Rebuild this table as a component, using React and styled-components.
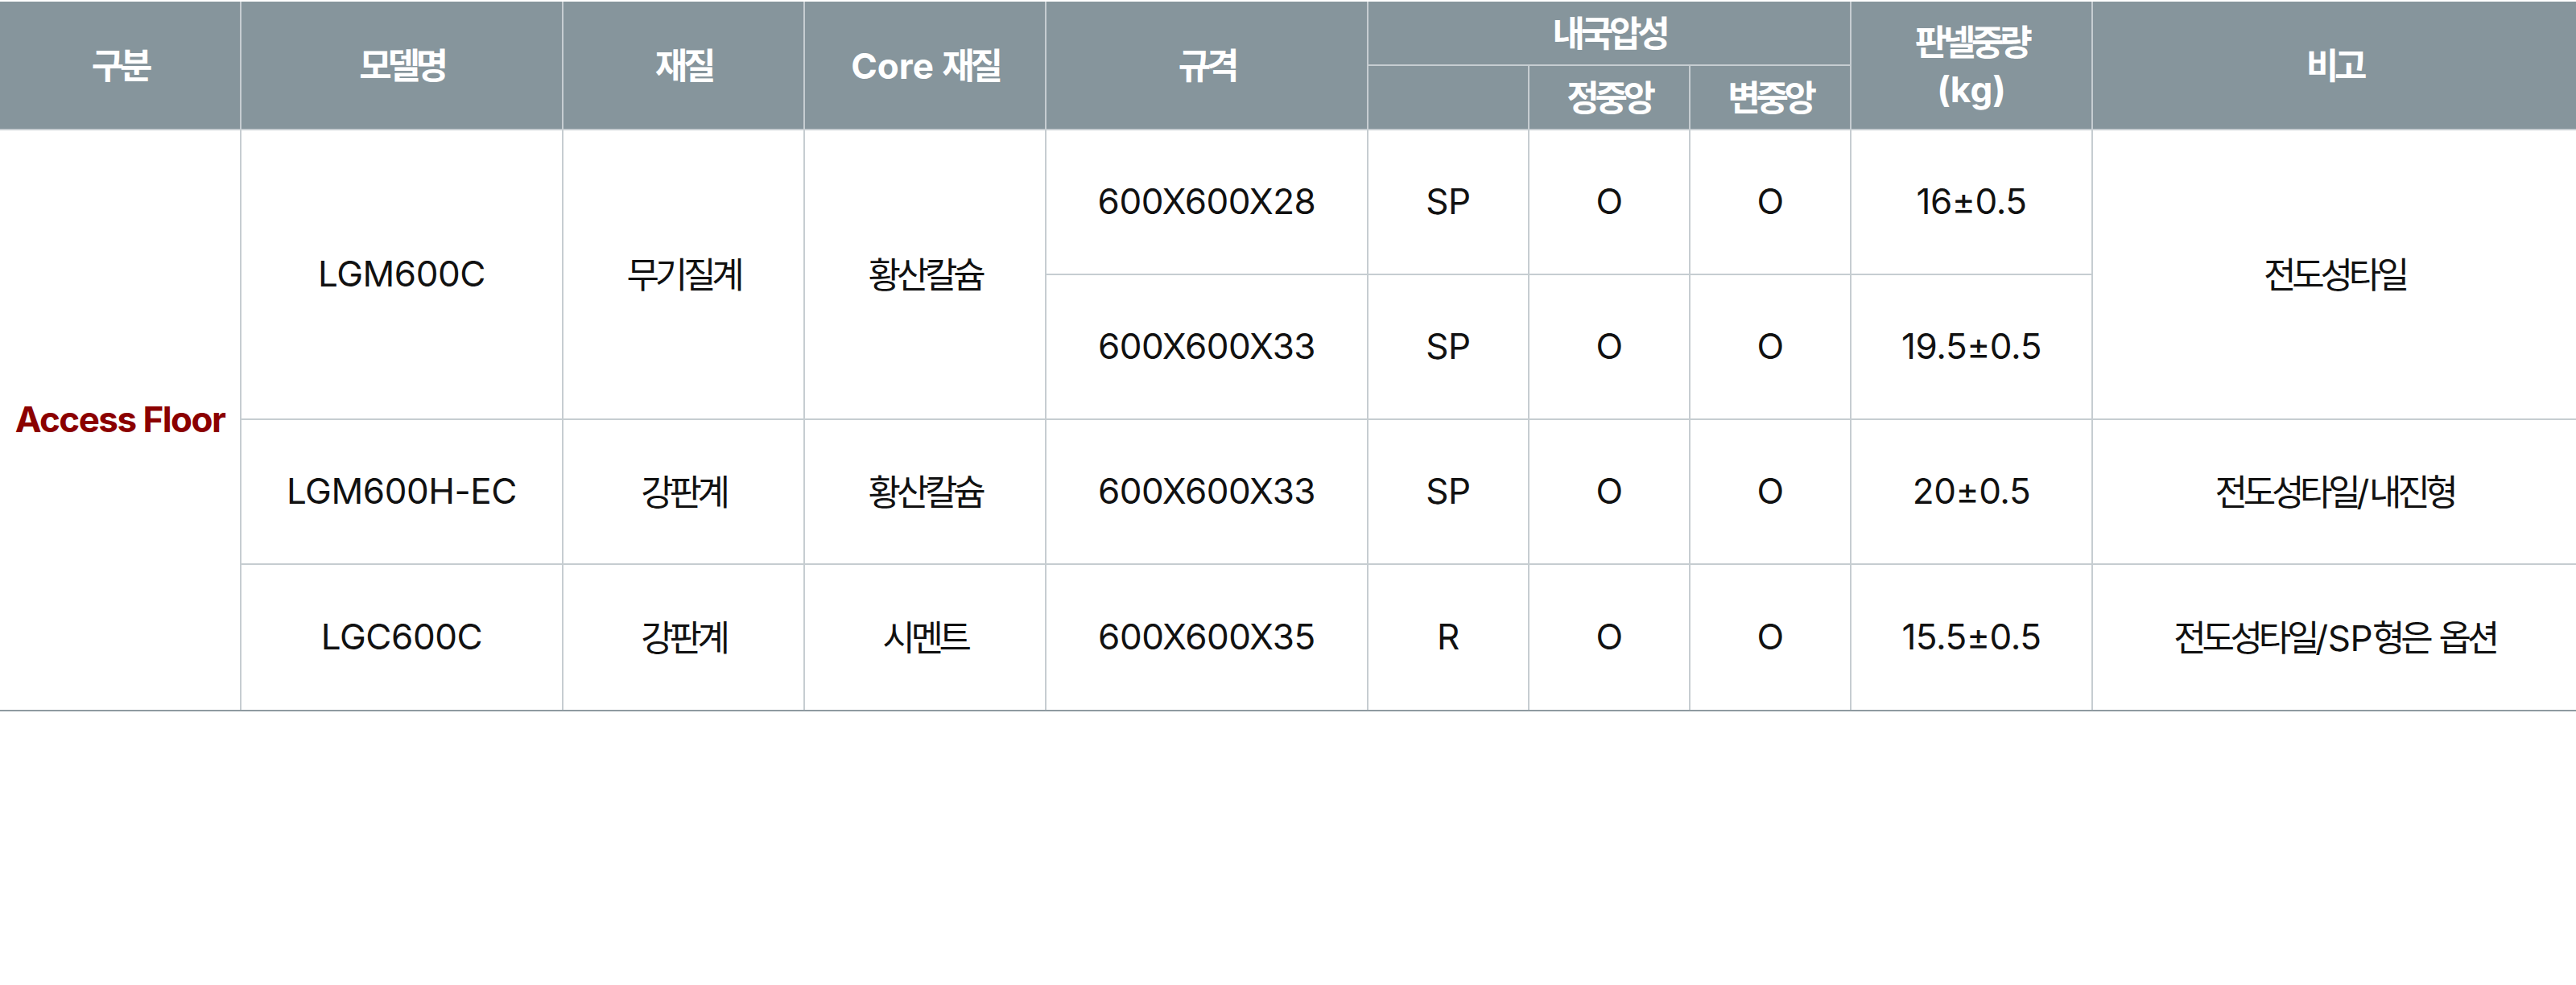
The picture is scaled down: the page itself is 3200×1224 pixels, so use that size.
import React from 'react';
import styled, { createGlobalStyle } from 'styled-components';

const GlobalStyle = createGlobalStyle`
  body {
    margin: 0;
    background: #fff;
    font-family: "Inter", "Noto Sans CJK KR", sans-serif;
  }
`;

const widths = [300, 400, 300, 300, 400, 200, 200, 200, 300, 600];

const rows = [
  { model: 'LGM600C', material: '무기질계', core: '황산칼슘', span: 2, spec: '600X600X28', type: 'SP', center: 'O', edge: 'O', weight: '16±0.5', note: '전도성타일' },
  { spec: '600X600X33', type: 'SP', center: 'O', edge: 'O', weight: '19.5±0.5' },
  { model: 'LGM600H-EC', material: '강판계', core: '황산칼슘', spec: '600X600X33', type: 'SP', center: 'O', edge: 'O', weight: '20±0.5', note: '전도성타일/내진형' },
  { model: 'LGC600C', material: '강판계', core: '시멘트', spec: '600X600X35', type: 'R', center: 'O', edge: 'O', weight: '15.5±0.5', note: '전도성타일/SP형은 옵션' },
];

// hangul runs get tighter spacing so they sit like the original font
const ko = (text) =>
  text.split(/([\uAC00-\uD7A3]+)/).map((part, i) =>
    /[\uAC00-\uD7A3]/.test(part) ? <Ko key={i}>{part}</Ko> : part
  );

function App() {
  return (
    <Wrapper>
      <GlobalStyle />
      <Table>
        <colgroup>
          {widths.map((w, i) => <col key={i} style={{ width: w }} />)}
        </colgroup>
        <thead>
          <HeadRow>
            <Th rowSpan={2}>{ko('구분')}</Th>
            <Th rowSpan={2}>{ko('모델명')}</Th>
            <Th rowSpan={2}>{ko('재질')}</Th>
            <Th rowSpan={2}>{ko('Core 재질')}</Th>
            <Th rowSpan={2}>{ko('규격')}</Th>
            <Th colSpan={3}>{ko('내국압성')}</Th>
            <Th rowSpan={2}>{ko('판넬중량')}<br />(kg)</Th>
            <Th rowSpan={2} $last>{ko('비고')}</Th>
          </HeadRow>
          <HeadRow>
            <Th></Th>
            <Th>{ko('정중앙')}</Th>
            <Th>{ko('변중앙')}</Th>
          </HeadRow>
        </thead>
        <tbody>
          {rows.map((r, i) => (
            <BodyRow key={i}>
              {i === 0 && <Group rowSpan={rows.length}>Access Floor</Group>}
              {r.model && <Td rowSpan={r.span || 1}>{r.model}</Td>}
              {r.material && <Td rowSpan={r.span || 1}>{ko(r.material)}</Td>}
              {r.core && <Td rowSpan={r.span || 1}>{ko(r.core)}</Td>}
              <Td>{r.spec}</Td>
              <Td>{r.type}</Td>
              <Td>{r.center}</Td>
              <Td>{r.edge}</Td>
              <Td>{r.weight}</Td>
              {r.note && <Td rowSpan={r.span || 1} $last>{ko(r.note)}</Td>}
            </BodyRow>
          ))}
        </tbody>
      </Table>
    </Wrapper>
  );
}

const Wrapper = styled.div`
  width: 3200px;
  padding-top: 2px;
`;

const Table = styled.table`
  width: 3200px;
  table-layout: fixed;
  border-collapse: separate;
  border-spacing: 0;
  border-bottom: 2px solid #8e9aa0;
`;

const HeadRow = styled.tr`
  height: 80px;
`;

const BodyRow = styled.tr`
  height: 180px;

  &:last-child td {
    border-bottom: none;
  }
`;

const Ko = styled.span`
  font-family: "Noto Sans CJK KR", sans-serif;
  letter-spacing: -0.12em;
`;

const Th = styled.th`
  padding: 0;
  background: #86959c;
  color: #fff;
  font-size: 44px;
  font-weight: 700;
  line-height: 1.3;
  text-align: center;
  vertical-align: middle;
  border-right: ${(p) => (p.$last ? 'none' : '2px solid #c6cdd1')};
  border-bottom: 2px solid #c6cdd1;
`;

const Td = styled.td`
  padding: 0;
  color: #111;
  font-size: 44px;
  font-weight: 400;
  line-height: 1.3;
  letter-spacing: -0.01em;
  text-align: center;
  vertical-align: middle;
  border-right: ${(p) => (p.$last ? 'none' : '2px solid #c6cdd1')};
  border-bottom: 2px solid #c6cdd1;
`;

const Group = styled(Td)`
  color: #8b0000;
  font-weight: 700;
  letter-spacing: -0.035em;
  border-bottom: none !important;
`;

export default App;
